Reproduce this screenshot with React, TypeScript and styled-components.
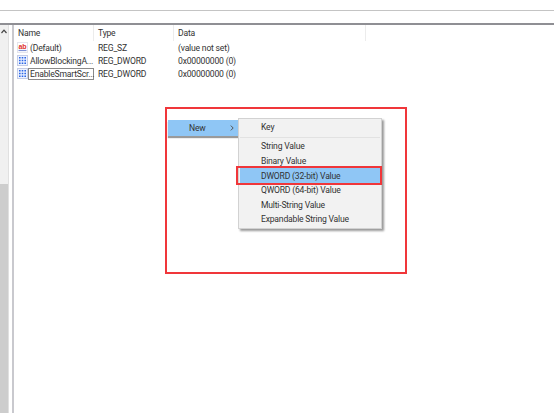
import styled, { createGlobalStyle } from "styled-components";

const GlobalStyle = createGlobalStyle`
  html, body {
    margin: 0;
    padding: 0;
    background: #fff;
  }
  body {
    font-family: Roboto, "Liberation Sans", sans-serif;
  }
`;

const Page = styled.div`
  width: 554px;
  height: 413px;
  overflow: hidden;
  display: flex;
  flex-direction: column;
  background: #fff;
  color: #333;
  font-size: 8.6px;
  letter-spacing: -0.2px;
`;

const TopBar = styled.div`
  height: 11px;
  flex: none;
  box-sizing: border-box;
  border-bottom: 1px solid #c4c4c4;
`;

const AddressBar = styled.div`
  height: 14px;
  flex: none;
  box-sizing: border-box;
  border-bottom: 2px solid #8f8f94;
`;

const Body = styled.div`
  flex: 1;
  display: flex;
  min-height: 0;
`;

const ScrollTrack = styled.div`
  width: 8px;
  flex: none;
  display: flex;
  flex-direction: column;
  background: #f0f0f0;
`;

const ScrollUp = styled.div`
  height: 12px;
  display: flex;
  align-items: center;
  justify-content: center;
`;

const ScrollSpace = styled.div`
  height: 147px;
`;

const ScrollThumb = styled.div`
  flex: 1;
  background: #cdcdcd;
`;

const Splitter = styled.div`
  width: 6px;
  flex: none;
  box-sizing: border-box;
  border-left: 1px solid #e0e0e0;
  border-right: 2px solid #c9c9ce;
`;

const Pane = styled.div`
  flex: 1;
  display: flex;
  flex-direction: column;
  position: relative;
`;

const HeaderRow = styled.div`
  height: 16px;
  display: flex;
  align-items: center;
`;

const HeaderCell = styled.div<{ $w: number }>`
  width: ${(p) => p.$w}px;
  height: 100%;
  flex: none;
  box-sizing: border-box;
  padding-left: 4px;
  display: flex;
  align-items: center;
  border-right: 1px solid #ececec;
`;

const Row = styled.div`
  height: 13px;
  display: flex;
  align-items: center;
`;

const NameCell = styled.div`
  width: 80px;
  flex: none;
  display: flex;
  align-items: center;
  gap: 2px;
  padding-left: 3px;
  box-sizing: border-box;
  white-space: nowrap;
`;

const TypeCell = styled.div`
  width: 80px;
  flex: none;
  padding-left: 4px;
  box-sizing: border-box;
`;

const DataCell = styled.div`
  padding-left: 4px;
`;

const EditName = styled.span`
  border: 1px solid #8a8a8a;
  margin-left: -2px;
  width: 66px;
  box-sizing: border-box;
  padding: 0 1px;
  line-height: 10px;
  background: #fff;
`;

const MenuLayer = styled.div`
  position: absolute;
  left: 151px;
  top: 82px;
  width: 242px;
  height: 167px;
  box-sizing: border-box;
  border: 2px solid #f0363a;
`;

const NewItem = styled.div`
  position: absolute;
  left: 1px;
  top: 11px;
  width: 70px;
  height: 16px;
  box-sizing: border-box;
  padding: 0 4px 0 21px;
  display: flex;
  align-items: center;
  justify-content: space-between;
  background: #8fc6f5;
  box-shadow: 0 2px 1px #9a9a9a;
`;

const SubMenu = styled.div`
  position: absolute;
  left: 71px;
  top: 9px;
  width: 144px;
  box-sizing: border-box;
  padding: 1px;
  background: #f2f2f2;
  border: 1px solid #d2d2d2;
  box-shadow: 2px 2px 2px #9a9a9a;
`;

const MenuItem = styled.div<{ $active?: boolean }>`
  height: 14.6px;
  display: flex;
  align-items: center;
  padding-left: 21px;
  background: ${(p) => (p.$active ? "#8fc6f5" : "transparent")};
`;

const MenuDivider = styled.div`
  height: 1px;
  margin: 2px 0 1.6px;
  background: #e2e2e2;
`;

const Highlight = styled.div`
  position: absolute;
  left: 69px;
  top: 57px;
  width: 146px;
  height: 19px;
  box-sizing: border-box;
  border: 2px solid #f0363a;
`;

const IconSvg = styled.svg`
  flex: none;
`;

function StringIcon() {
  return (
    <IconSvg width="11" height="11" viewBox="0 0 11 11">
      <rect x="0.5" y="0.5" width="10" height="10" fill="#fff" stroke="#e4e4ec" />
      <text x="5.5" y="6.5" fontSize="7" fontWeight="700" fill="#e0322c" textAnchor="middle" letterSpacing="0" fontFamily="Liberation Sans, sans-serif">
        ab
      </text>
      <path d="M1.5 8.5h8" stroke="#7f93d6" strokeWidth="1.2" />
    </IconSvg>
  );
}

function BinaryIcon() {
  return (
    <IconSvg width="11" height="11" viewBox="0 0 11 11">
      <rect x="0.5" y="0.5" width="10" height="10" fill="#eef3ff" stroke="#c4cce6" />
      <path
        d="M2 2h1.6v1.6H2zM4.7 2h1.6v1.6H4.7zM7.4 2H9v1.6H7.4zM2 4.7h1.6v1.6H2zM4.7 4.7h1.6v1.6H4.7zM7.4 4.7H9v1.6H7.4zM2 7.4h1.6V9H2zM4.7 7.4h1.6V9H4.7zM7.4 7.4H9V9H7.4z"
        fill="#2a66e6"
      />
    </IconSvg>
  );
}

function UpArrow() {
  return (
    <svg width="6" height="5" viewBox="0 0 6 5">
      <path d="M0.5 4L3 1.2L5.5 4" fill="none" stroke="#444" strokeWidth="1.2" />
    </svg>
  );
}

function Chevron() {
  return (
    <svg width="4" height="6" viewBox="0 0 4 6">
      <path d="M0.8 0.6L3.2 3L0.8 5.4" fill="none" stroke="#555" strokeWidth="1" />
    </svg>
  );
}

export default function App() {
  return (
    <Page>
      <GlobalStyle />
      <TopBar />
      <AddressBar />
      <Body>
        <ScrollTrack>
          <ScrollUp>
            <UpArrow />
          </ScrollUp>
          <ScrollSpace />
          <ScrollThumb />
        </ScrollTrack>
        <Splitter />
        <Pane>
          <HeaderRow>
            <HeaderCell $w={80}>Name</HeaderCell>
            <HeaderCell $w={80}>Type</HeaderCell>
            <HeaderCell $w={192}>Data</HeaderCell>
          </HeaderRow>
          <Row>
            <NameCell>
              <StringIcon />
              (Default)
            </NameCell>
            <TypeCell>REG_SZ</TypeCell>
            <DataCell>(value not set)</DataCell>
          </Row>
          <Row>
            <NameCell>
              <BinaryIcon />
              AllowBlockingA...
            </NameCell>
            <TypeCell>REG_DWORD</TypeCell>
            <DataCell>0x00000000 (0)</DataCell>
          </Row>
          <Row>
            <NameCell>
              <BinaryIcon />
              <EditName>EnableSmartScr...</EditName>
            </NameCell>
            <TypeCell>REG_DWORD</TypeCell>
            <DataCell>0x00000000 (0)</DataCell>
          </Row>
          <MenuLayer>
            <NewItem>
              New
              <Chevron />
            </NewItem>
            <SubMenu>
              <MenuItem>Key</MenuItem>
              <MenuDivider />
              <MenuItem>String Value</MenuItem>
              <MenuItem>Binary Value</MenuItem>
              <MenuItem $active>DWORD (32-bit) Value</MenuItem>
              <MenuItem>QWORD (64-bit) Value</MenuItem>
              <MenuItem>Multi-String Value</MenuItem>
              <MenuItem>Expandable String Value</MenuItem>
            </SubMenu>
            <Highlight />
          </MenuLayer>
        </Pane>
      </Body>
    </Page>
  );
}
